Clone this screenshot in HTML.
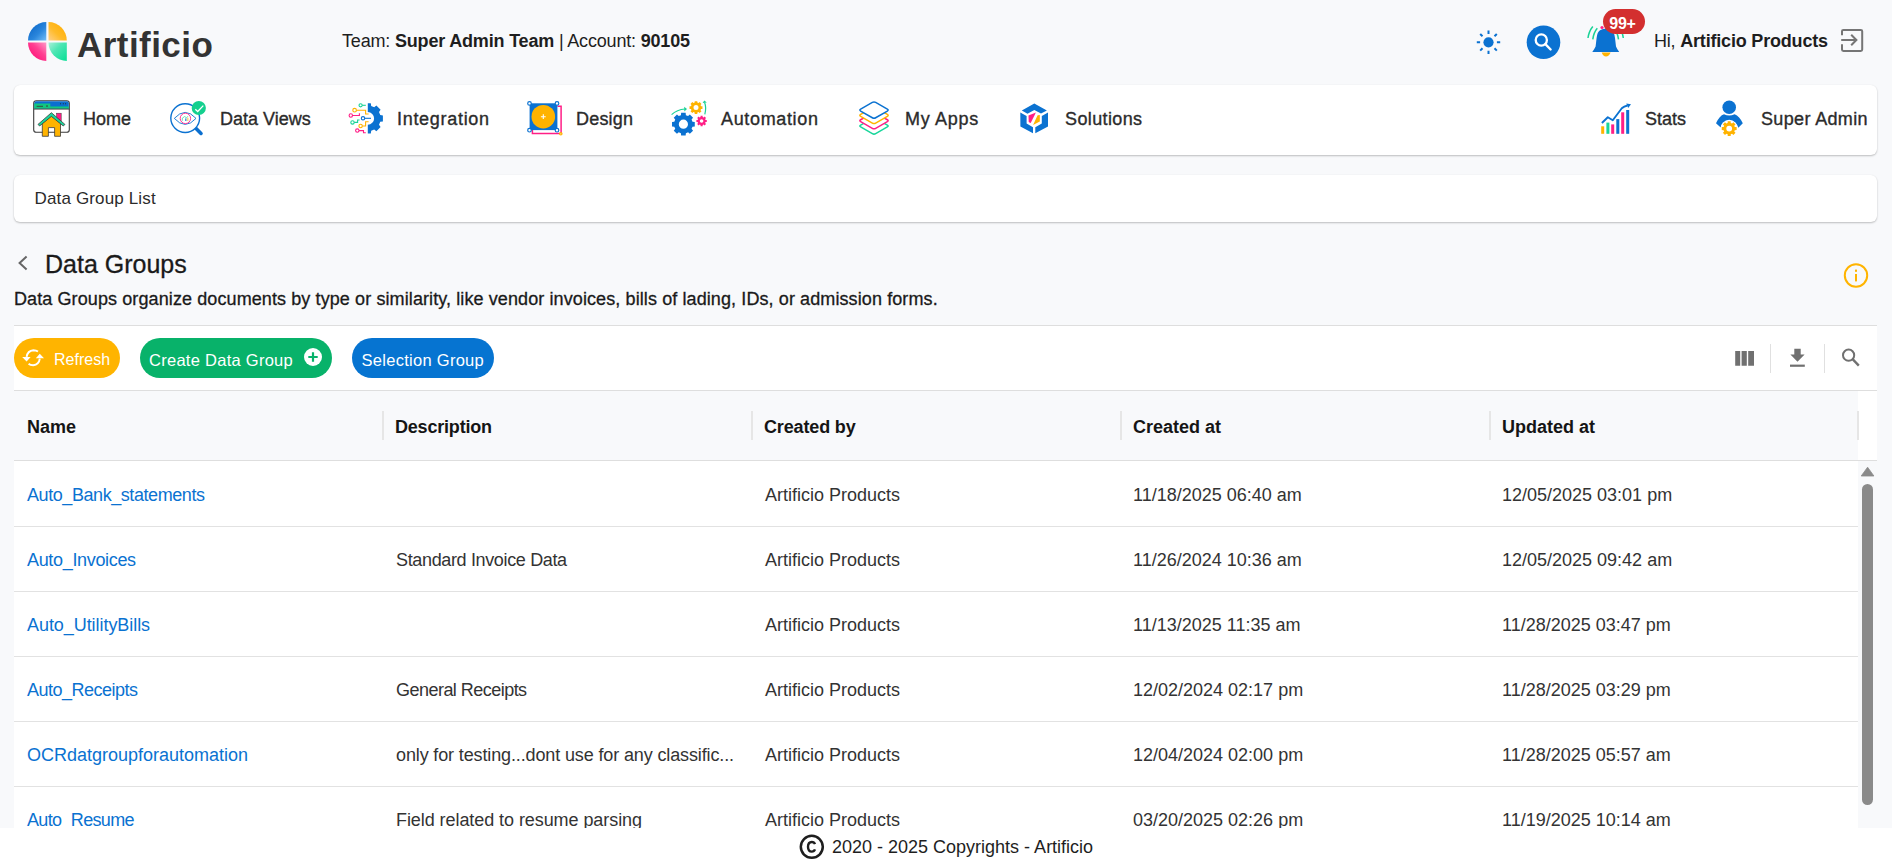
<!DOCTYPE html>
<html><head><meta charset="utf-8">
<style>
*{box-sizing:border-box;margin:0;padding:0}
html,body{width:1892px;height:865px;overflow:hidden}
body{background:#f8f9fb;font-family:"Liberation Sans",sans-serif;color:#212121;position:relative}
.a{position:absolute;white-space:nowrap}
.t18{font-size:18px;line-height:18px}
.card{position:absolute;background:#fff;border-radius:6px;box-shadow:0 1px 2px rgba(0,0,0,0.24),0 0 1px rgba(0,0,0,0.06)}
.nav{color:#2b2b2b;-webkit-text-stroke:0.35px #2b2b2b}
.sb{-webkit-text-stroke:0.3px currentColor}
.b{font-weight:700}
.btn{position:absolute;top:338px;height:40px;border-radius:20px;color:#fff}
.hdr{font-weight:700;color:#151515}
.cell{color:#333}
.lnk{color:#0a72d1}
.row{position:absolute;left:14px;width:1844px;height:1px;background:#e2e2e2}
.sep{position:absolute;top:411px;width:2px;height:29px;background:#e6e6e6}
</style></head><body>

<!-- header -->
<svg class="a" style="left:27px;top:20px" width="41" height="42" viewBox="0 0 41 42">
 <defs>
  <linearGradient id="lg1" x1="0.1" y1="0.1" x2="1" y2="1"><stop offset="0" stop-color="#0a66c8"/><stop offset="0.55" stop-color="#2a86dc"/><stop offset="1" stop-color="#72bdf7"/></linearGradient>
  <linearGradient id="lg2" x1="0.9" y1="0.1" x2="0" y2="1"><stop offset="0" stop-color="#ffae00"/><stop offset="0.55" stop-color="#ffbb2a"/><stop offset="1" stop-color="#ffd08a"/></linearGradient>
  <linearGradient id="lg3" x1="0.1" y1="0.9" x2="1" y2="0"><stop offset="0" stop-color="#ff0a73"/><stop offset="0.55" stop-color="#ff3f92"/><stop offset="1" stop-color="#ff9ac8"/></linearGradient>
  <linearGradient id="lg4" x1="0.9" y1="0.9" x2="0" y2="0"><stop offset="0" stop-color="#12e09a"/><stop offset="0.55" stop-color="#4ee6b4"/><stop offset="1" stop-color="#a8f0d8"/></linearGradient>
 </defs>
 <path d="M19.3 20.4 H1 A18.3 18.3 0 0 1 19.3 2.1 Z" fill="url(#lg1)"/>
 <path d="M21.5 20.4 V2.1 A18.3 18.3 0 0 1 39.8 20.4 Z" fill="url(#lg2)"/>
 <path d="M19.3 22.6 V40.9 A18.3 18.3 0 0 1 1 22.6 Z" fill="url(#lg3)"/>
 <path d="M21.5 22.6 H39.8 V40.9 A18.3 18.3 0 0 1 21.5 22.6 Z" fill="url(#lg4)"/>
</svg>
<div class="a b" style="left:77px;top:26.5px;font-size:35px;line-height:35px;color:#333;letter-spacing:0.45px">Artificio</div>

<div class="a t18" style="left:342px;top:32px;color:#1e1e1e;letter-spacing:-0.18px">Team: <b>Super Admin Team</b> | Account: <b>90105</b></div>

<div class="a t18" style="left:1654px;top:32px;color:#1e1e1e;letter-spacing:-0.19px">Hi, <b>Artificio Products</b></div>

<!-- header right icons -->
<svg class="a" style="left:1470px;top:24px" width="38" height="38" viewBox="0 0 38 38">
 <circle cx="18.5" cy="18.3" r="5.1" fill="#0b72d1"/>
 <g stroke="#0b72d1" stroke-width="2" stroke-linecap="butt">
  <path d="M18.5 6.6 V9.9 M18.5 26.7 V30 M6.8 18.3 H10.1 M26.9 18.3 H30.2 M10.2 10 L12.5 12.3 M24.5 24.3 L26.8 26.6 M10.2 26.6 L12.5 24.3 M24.5 12.3 L26.8 10"/>
 </g>
</svg>
<svg class="a" style="left:1526px;top:25px" width="36" height="36" viewBox="0 0 36 36">
 <circle cx="17.5" cy="17.3" r="16.8" fill="#0b72d1"/>
 <circle cx="15.3" cy="15" r="5.6" fill="none" stroke="#fff" stroke-width="2.3"/>
 <path d="M19.4 19.2 L24.6 24.5" stroke="#fff" stroke-width="2.4" stroke-linecap="round"/>
</svg>
<svg class="a" style="left:1584px;top:18px" width="44" height="42" viewBox="0 0 44 42">
 <g fill="none" stroke="#19d296" stroke-width="1.5">
  <path d="M8.8 8.5 Q4.8 13.5 4 20"/><path d="M13.3 10.2 Q9.6 14.5 8.8 21.3"/>
  <path d="M34.5 8.5 Q38.5 13.5 39.3 20"/><path d="M30 10.2 Q33.7 14.5 34.5 21.3"/>
 </g>
 <circle cx="18" cy="9.5" r="1.6" fill="#ff1f86"/>
 <path d="M16 12.2 Q13.2 14 12.6 20 L11.6 28.5 Q10.2 31.5 8.3 33.9 H35.2 Q33.2 31.5 32 28.5 L31 20 Q30.4 14 27.5 12.2 Q22 9.5 16 12.2Z" fill="#0b72d1"/>
 <path d="M17.6 34.4 H26.6 Q25 38.5 22 38.5 Q19.2 38.5 17.6 34.4Z" fill="#ffb300"/>
 <path d="M20.7 11 Q22 8 24 11Z" fill="#ff1f86"/>
</svg>
<div class="a" style="left:1602.6px;top:9.3px;width:42.6px;height:25.2px;border-radius:12.6px;background:#d32f2f"></div>
<div class="a b" style="left:1609.3px;top:15.6px;font-size:16px;line-height:16px;color:#fff;letter-spacing:-0.3px">99+</div>
<svg class="a" style="left:1838px;top:26px" width="28" height="28" viewBox="0 0 28 28">
 <path d="M4 9.3 V5.3 Q4 3.9 5.4 3.9 H22.8 Q24.2 3.9 24.2 5.3 V23.5 Q24.2 24.9 22.8 24.9 H5.4 Q4 24.9 4 23.5 V18.3" fill="none" stroke="#757575" stroke-width="2"/>
 <path d="M3.2 14 H18" stroke="#757575" stroke-width="2"/>
 <path d="M13.2 8.8 L18.4 14 L13.2 19.2" fill="none" stroke="#757575" stroke-width="2"/>
</svg>

<!-- nav card -->
<div class="card" style="left:14px;top:85px;width:1863px;height:70px"></div>
<div class="a t18 nav" style="left:83px;top:110px">Home</div>
<div class="a t18 nav" style="left:220px;top:110px">Data Views</div>
<div class="a t18 nav" style="left:397px;top:110px;letter-spacing:0.7px">Integration</div>
<div class="a t18 nav" style="left:576px;top:110px;letter-spacing:0.2px">Design</div>
<div class="a t18 nav" style="left:721px;top:110px;letter-spacing:0.65px">Automation</div>
<div class="a t18 nav" style="left:905px;top:110px;letter-spacing:0.7px">My Apps</div>
<div class="a t18 nav" style="left:1065px;top:110px;letter-spacing:0.37px">Solutions</div>
<div class="a t18 nav" style="left:1645px;top:110px">Stats</div>
<div class="a t18 nav" style="left:1761px;top:110px;letter-spacing:0.35px">Super Admin</div>

<!-- nav icons -->
<svg class="a" style="left:28px;top:95px" width="50" height="47" viewBox="0 0 50 47">
 <rect x="5.7" y="5.7" width="35.6" height="31.6" rx="2.6" fill="#fff" stroke="#3b3b3b" stroke-width="1.1"/>
 <path d="M6.3 8.3 Q6.3 6.3 8.3 6.3 H38.8 Q40.8 6.3 40.8 8.3 V13.7 H6.3Z" fill="#0b6fd0"/>
 <path d="M6.3 8.6 H22.3 V11.4 H40.8 V13.7 H6.3Z" fill="#11c77f"/>
 <line x1="5.8" y1="14.1" x2="41.2" y2="14.1" stroke="#3b3b3b" stroke-width="0.9"/>
 <line x1="8.6" y1="11.3" x2="15" y2="11.3" stroke="#3b3b3b" stroke-width="0.9"/>
 <circle cx="19" cy="11.1" r="0.8" fill="#3b3b3b"/>
 <circle cx="32.6" cy="8.7" r="0.55" fill="#222"/><circle cx="35.3" cy="8.7" r="0.55" fill="#222"/><circle cx="37.6" cy="8.7" r="0.55" fill="#222"/>
 <rect x="28.6" y="18.2" width="4.6" height="8" fill="#ff1f86" stroke="#3b3b3b" stroke-width="0.5"/>
 <path d="M14.3 41.3 V28.4 L23.4 20.8 L32.5 28.4 V41.3 H26.6 V32.6 H20.4 V41.3Z" fill="#ffb300" stroke="#3b3b3b" stroke-width="0.8"/>
 <path d="M23.4 17.7 L36.9 29.4 L35.3 31 L23.4 21.4 L11.6 31 L10 29.4Z" fill="#18d69b" stroke="#3b3b3b" stroke-width="0.8" stroke-linejoin="round"/>
</svg>
<svg class="a" style="left:164px;top:95px" width="50" height="47" viewBox="0 0 50 47">
 <line x1="31.8" y1="33.2" x2="37" y2="38.4" stroke="#0b6fcf" stroke-width="3.6" stroke-linecap="round"/>
 <circle cx="21.2" cy="23.1" r="14.4" fill="#fff" stroke="#0b72d1" stroke-width="1.4"/>
 <path d="M10.3 23.4 Q21.2 11.4 32 23.4 Q21.2 35.4 10.3 23.4Z" fill="none" stroke="#0b72d1" stroke-width="0.9"/>
 <circle cx="21.4" cy="23.4" r="5.2" fill="#fff" stroke="#ff1f86" stroke-width="0.9"/>
 <path d="M18.3 25.8 V23.2 L20.6 21.6 L22.3 22.6 L24.2 21.4" fill="none" stroke="#2fd09a" stroke-width="0.7"/>
 <rect x="21.3" y="23.4" width="1.1" height="2.6" fill="#0b72d1"/><rect x="23.3" y="22.8" width="1.1" height="3.2" fill="#ffc94a"/>
 <circle cx="34.8" cy="13" r="7.1" fill="#14d08f"/>
 <path d="M31.3 14.3 L33.7 16.5 L39.3 10.6" fill="none" stroke="#fff" stroke-width="1.3"/>
</svg>
<svg class="a" style="left:342px;top:95px" width="50" height="47" viewBox="0 0 50 47">
 <defs><clipPath id="hg"><rect x="25.8" y="0" width="25" height="47"/></clipPath></defs>
 <path clip-path="url(#hg)" fill-rule="evenodd" fill="#0b72d1" d="M22.40 10.96 L22.80 8.30 L28.80 8.30 L29.20 10.96 L32.19 12.19 L34.36 10.60 L38.60 14.84 L37.01 17.01 L38.24 20.00 L40.90 20.40 L40.90 26.40 L38.24 26.80 L37.01 29.79 L38.60 31.96 L34.36 36.20 L32.19 34.61 L29.20 35.84 L28.80 38.50 L22.80 38.50 L22.40 35.84 L19.41 34.61 L17.24 36.20 L13.00 31.96 L14.59 29.79 L13.36 26.80 L10.70 26.40 L10.70 20.40 L13.36 20.00 L14.59 17.01 L13.00 14.84 L17.24 10.60 L19.41 12.19Z M32.10 23.40 A6.3 6.3 0 1 0 19.50 23.40 A6.3 6.3 0 1 0 32.10 23.40Z"/>
 <g fill="none" stroke-width="1.1">
  <g stroke="#19d296"><circle cx="18.6" cy="10.3" r="1.6"/><path d="M20.2 10.3 H23.8"/><circle cx="10.5" cy="27.4" r="1.7"/><path d="M12.2 27.4 H15.6 V25 H17.6"/></g>
  <g stroke="#ffb300"><circle cx="12.6" cy="15.2" r="1.8"/><path d="M14.4 15.2 H23.6 V19 H26.6"/><circle cx="18.6" cy="31" r="1.7"/><path d="M20.3 31 H23.6 V26.8 H26.6"/></g>
  <g stroke="#ff1f86"><circle cx="8.8" cy="20.5" r="1.7"/><path d="M10.5 20.5 H17.4 V18.2"/><circle cx="15.3" cy="35.6" r="1.7"/><path d="M17 35.6 H21.5 V37.8 H23.8"/></g>
  <g stroke="#0b72d1"><circle cx="21" cy="23.3" r="1.7"/><path d="M22.7 23.3 H29"/></g>
 </g>
</svg>
<svg class="a" style="left:520px;top:95px" width="50" height="47" viewBox="0 0 50 47">
 <path d="M37.5 11.3 H41.1 V38.6 H12.4 V35" fill="none" stroke="#ff1f86" stroke-width="1.5"/>
 <rect x="9.6" y="8.3" width="27.8" height="26.8" fill="#0b72d1"/>
 <circle cx="23.3" cy="21.7" r="11.8" fill="#ffb300"/>
 <path d="M23.3 19.3 V24.1 M20.9 21.7 H25.7" stroke="#fff" stroke-width="1.1"/>
 <g fill="#fff" stroke="#0b72d1" stroke-width="1.2"><circle cx="9.5" cy="8.4" r="1.8"/><circle cx="37" cy="8.4" r="1.8"/><circle cx="9.5" cy="35.2" r="1.8"/><circle cx="37" cy="35.2" r="1.8"/></g>
 <circle cx="40.8" cy="38.8" r="1.8" fill="#ffb300"/><circle cx="40.8" cy="38.8" r="0.6" fill="#ffe7a8"/>
</svg>
<svg class="a" style="left:665px;top:95px" width="50" height="47" viewBox="0 0 50 47">
 <path fill-rule="evenodd" fill="#0b72d1" d="M15.92 20.13 L16.14 17.82 L20.66 17.82 L20.88 20.13 L23.06 21.03 L24.84 19.55 L28.05 22.76 L26.57 24.54 L27.47 26.72 L29.78 26.94 L29.78 31.46 L27.47 31.68 L26.57 33.86 L28.05 35.64 L24.84 38.85 L23.06 37.37 L20.88 38.27 L20.66 40.58 L16.14 40.58 L15.92 38.27 L13.74 37.37 L11.96 38.85 L8.75 35.64 L10.23 33.86 L9.33 31.68 L7.02 31.46 L7.02 26.94 L9.33 26.72 L10.23 24.54 L8.75 22.76 L11.96 19.55 L13.74 21.03Z M23.00 29.20 A4.6 4.6 0 1 0 13.80 29.20 A4.6 4.6 0 1 0 23.00 29.20Z"/>
 <path fill-rule="evenodd" fill="#ffb300" d="M29.63 7.58 L29.71 6.13 L32.29 6.13 L32.37 7.58 L33.58 8.08 L34.67 7.11 L36.49 8.93 L35.52 10.02 L36.02 11.23 L37.47 11.31 L37.47 13.89 L36.02 13.97 L35.52 15.18 L36.49 16.27 L34.67 18.09 L33.58 17.12 L32.37 17.62 L32.29 19.07 L29.71 19.07 L29.63 17.62 L28.42 17.12 L27.33 18.09 L25.51 16.27 L26.48 15.18 L25.98 13.97 L24.53 13.89 L24.53 11.31 L25.98 11.23 L26.48 10.02 L25.51 8.93 L27.33 7.11 L28.42 8.08Z M33.50 12.60 A2.5 2.5 0 1 0 28.50 12.60 A2.5 2.5 0 1 0 33.50 12.60Z"/>
 <path fill-rule="evenodd" fill="#ff1f86" d="M35.52 22.05 L35.57 20.80 L37.63 20.80 L37.68 22.05 L38.63 22.44 L39.54 21.59 L41.01 23.06 L40.16 23.970 L40.55 24.92 L41.80 24.97 L41.80 27.03 L40.55 27.08 L40.16 28.03 L41.01 28.94 L39.54 30.41 L38.63 29.56 L37.68 29.95 L37.63 31.20 L35.57 31.20 L35.52 29.95 L34.57 29.56 L33.66 30.41 L32.19 28.94 L33.04 28.03 L32.65 27.08 L31.40 27.03 L31.40 24.97 L32.65 24.92 L33.04 23.97 L32.19 23.06 L33.66 21.59 L34.57 22.44Z M38.40 26.00 A1.8 1.8 0 1 0 34.80 26.00 A1.8 1.8 0 1 0 38.40 26.00Z"/>
 <path d="M6.6 19.6 Q12 14.6 20 14" fill="none" stroke="#19d296" stroke-width="1.2"/>
 <path d="M19.2 11.8 L22 14 L19.4 16.4Z" fill="#19d296"/>
 <path d="M39.8 19.4 Q41.6 12.5 39.6 7.6" fill="none" stroke="#19d296" stroke-width="1.2"/>
 <path d="M37.6 8 L39.3 5.6 L41.8 7.4Z" fill="#19d296"/>
</svg>
<svg class="a" style="left:850px;top:95px" width="50" height="47" viewBox="0 0 50 47">
 <g stroke-width="1.5" stroke-linejoin="round" fill="#fff">
  <path d="M22.35 23.35 Q24.00 22.40 25.65 23.35 L37.35 30.05 Q39.00 31.00 37.35 31.95 L25.65 38.65 Q24.00 39.60 22.35 38.65 L10.65 31.95 Q9.00 31.00 10.65 30.05Z" stroke="#18d69b"/>
  <path d="M22.35 18.05 Q24.00 17.10 25.65 18.05 L37.35 24.75 Q39.00 25.70 37.35 26.65 L25.65 33.35 Q24.00 34.30 22.35 33.35 L10.65 26.65 Q9.00 25.70 10.65 24.75Z" stroke="#ff1f86"/>
  <path d="M22.35 12.75 Q24.00 11.80 25.65 12.75 L37.35 19.45 Q39.00 20.40 37.35 21.35 L25.65 28.05 Q24.00 29.00 22.35 28.05 L10.65 21.35 Q9.00 20.40 10.65 19.45Z" stroke="#ffb300"/>
  <path d="M22.35 7.45 Q24.00 6.50 25.65 7.45 L37.35 14.15 Q39.00 15.10 37.35 16.05 L25.65 22.75 Q24.00 23.70 22.35 22.75 L10.65 16.05 Q9.00 15.10 10.65 14.15Z" stroke="#0b72d1"/>
 </g>
</svg>
<svg class="a" style="left:1010px;top:95px" width="50" height="47" viewBox="0 0 50 47">
 <g fill="#0b72d1">
  <path d="M11.8 15.4 L24.3 8.6 L36.9 15.4 L31 18.6 L24.3 15 L17.5 18.7Z"/>
  <path d="M10.3 17.6 L16.6 21 V28.6 L23 32.2 V38.3 L10.4 31.4Z"/>
  <path d="M38 17.6 L31.8 21 V28.6 L25.3 32.2 V38.3 L38 31.4Z"/>
 </g>
 <path d="M18.5 20.5 L25.9 17.6 L20.7 28 Q19 27.8 18.7 26.4Z" fill="#ff1f86"/>
 <path d="M27.6 20.3 L29.8 19.9 V26.4 L23.1 29.9Z" fill="#ffb300"/>
</svg>
<svg class="a" style="left:1592px;top:95px" width="50" height="47" viewBox="0 0 50 47">
 <rect x="9.2" y="31.3" width="3" height="7.5" fill="#ffb300"/>
 <rect x="14.4" y="27.6" width="3" height="11.2" fill="#18d69b"/>
 <rect x="19.2" y="29.4" width="3" height="9.4" fill="#ff1f86"/>
 <rect x="24.3" y="24.1" width="3" height="14.7" fill="#0b72d1"/>
 <rect x="29.2" y="17.3" width="3" height="21.5" fill="#ff1f86"/>
 <rect x="34.2" y="15" width="3" height="23.8" fill="#0b72d1"/>
 <path d="M9.9 28 L15.8 22.2 L20.8 25.3 L29.8 13.2 Q32 11.3 35.5 10.5" fill="none" stroke="#0b72d1" stroke-width="1.9" stroke-linejoin="round"/>
 <path d="M34.3 8.5 L39 9.2 L36.2 13Z" fill="#0b72d1"/>
</svg>
<svg class="a" style="left:1705px;top:95px" width="50" height="47" viewBox="0 0 50 47">
 <circle cx="24.2" cy="12.3" r="6.8" fill="#0b72d1"/>
 <path d="M11 28.3 Q14.5 20.5 19 19.2 Q24.2 21.6 29.6 19.2 Q34.5 21 37.8 28.3 L33.3 32.7 Q30.5 25.6 24.2 25.4 Q17.8 25.6 15.7 32.6Z" fill="#0b72d1"/>
 <circle cx="24.2" cy="33.6" r="8.8" fill="#fff"/>
 <path fill-rule="evenodd" fill="#ffb300" d="M22.67 28.01 L22.72 26.15 L25.68 26.15 L25.73 28.01 L27.07 28.56 L28.42 27.28 L30.52 29.38 L29.24 30.73 L29.79 32.07 L31.65 32.12 L31.65 35.08 L29.79 35.13 L29.24 36.47 L30.52 37.82 L28.42 39.92 L27.07 38.64 L25.73 39.19 L25.68 41.05 L22.72 41.05 L22.67 39.19 L21.33 38.64 L19.98 39.92 L17.88 37.82 L19.16 36.47 L18.61 35.13 L16.75 35.08 L16.75 32.12 L18.61 32.07 L19.16 30.73 L17.88 29.38 L19.98 27.28 L21.330 28.56Z M27.10 33.60 A2.9 2.9 0 1 0 21.30 33.60 A2.9 2.9 0 1 0 27.10 33.60Z"/>
</svg>

<!-- breadcrumb -->
<div class="card" style="left:14px;top:175px;width:1863px;height:47px"></div>
<div class="a" style="left:34.5px;top:190px;font-size:17px;line-height:17px;color:#2b2b2b;letter-spacing:0.15px">Data Group List</div>

<!-- title -->
<div class="a sb" style="left:45px;top:252px;font-size:25px;line-height:25px;color:#1a1a1a">Data Groups</div>
<div class="a t18 sb" style="left:14px;top:290px;color:#1a1a1a;letter-spacing:0.1px">Data Groups organize documents by type or similarity, like vendor invoices, bills of lading, IDs, or admission forms.</div>

<!-- toolbar -->
<div class="a" style="left:14px;top:325px;width:1863px;height:66px;background:#fff;border-top:1px solid #dedede;border-bottom:1px solid #dedede"></div>
<div class="btn" style="left:14px;width:106px;background:#ffb400"></div>
<div class="btn" style="left:140px;width:192px;background:#08b26a"></div>
<div class="btn" style="left:352px;width:142px;background:#0674d1"></div>
<div class="a" style="left:54px;top:352px;font-size:16px;line-height:16px;color:#fff">Refresh</div>
<div class="a" style="left:149px;top:351.5px;font-size:16.5px;line-height:16px;color:#fff;letter-spacing:0.27px">Create Data Group</div>
<div class="a" style="left:361.5px;top:351.5px;font-size:16.5px;line-height:16px;color:#fff;letter-spacing:0.28px">Selection Group</div>

<!-- misc icons -->
<svg class="a" style="left:14px;top:252px" width="20" height="22" viewBox="0 0 20 22">
 <path d="M12.6 4.6 L5.6 11 L12.6 17.4" fill="none" stroke="#666" stroke-width="2"/>
</svg>
<svg class="a" style="left:1840px;top:260px" width="32" height="32" viewBox="0 0 32 32">
 <circle cx="16" cy="15.5" r="11.2" fill="none" stroke="#ffb400" stroke-width="2"/>
 <rect x="15" y="14" width="2" height="7.4" fill="#ffb400"/>
 <rect x="15" y="9.6" width="2" height="2.2" fill="#ffb400"/>
</svg>
<svg class="a" style="left:20px;top:346px" width="26" height="24" viewBox="0 0 26 24">
 <path d="M6.6 10.8 Q7.6 4.6 13.4 4.2 Q16.2 4.2 18 5.6" fill="none" stroke="#fff" stroke-width="1.9"/>
 <path d="M19.8 12.6 Q19 18.6 13.2 19.2 Q10.2 19.2 8.6 17.8" fill="none" stroke="#fff" stroke-width="1.9"/>
 <path d="M2.2 11 L6.6 15.4 L10.6 11Z" fill="#fff"/>
 <path d="M15.8 12.2 L19.8 7.8 L24 12.2Z" fill="#fff"/>
</svg>
<svg class="a" style="left:302px;top:346px" width="22" height="22" viewBox="0 0 22 22">
 <circle cx="11" cy="11" r="9" fill="#fff"/>
 <path d="M11 6.3 V15.7 M6.3 11 H15.7" stroke="#08b26a" stroke-width="2.2"/>
</svg>
<svg class="a" style="left:1730px;top:344px" width="30" height="28" viewBox="0 0 30 28">
 <path d="M5.2 7 H10.2 V21.7 H5.2Z M11.6 7 H16.8 V21.7 H11.6Z M18.2 7 H24 V21.7 H18.2Z" fill="#707070"/>
</svg>
<div class="a" style="left:1770px;top:344px;width:1px;height:29px;background:#e0e0e0"></div>
<svg class="a" style="left:1783px;top:344px" width="30" height="28" viewBox="0 0 30 28">
 <path d="M11.3 4.8 H17.7 V10.5 H21.6 L14.5 17.7 L7.4 10.5 H11.3Z" fill="#707070"/>
 <rect x="7" y="20.6" width="14.8" height="2.2" fill="#707070"/>
</svg>
<div class="a" style="left:1824px;top:344px;width:1px;height:29px;background:#e0e0e0"></div>
<svg class="a" style="left:1838px;top:344px" width="28" height="28" viewBox="0 0 28 28">
 <circle cx="10.6" cy="11.2" r="5.6" fill="none" stroke="#707070" stroke-width="2"/>
 <path d="M14.6 15.2 L20.8 21.6" stroke="#707070" stroke-width="2.4"/>
</svg>


<!-- table header -->
<div class="a" style="left:14px;top:391px;width:1844px;height:69px;background:#f8f9fb"></div>
<div class="a" style="left:1858px;top:391px;width:19px;height:69px;background:#fff"></div>
<div class="a" style="left:14px;top:460px;width:1863px;height:1px;background:#dedede"></div>
<div class="sep" style="left:382px"></div>
<div class="sep" style="left:751px"></div>
<div class="sep" style="left:1120px"></div>
<div class="sep" style="left:1489px"></div>
<div class="sep" style="left:1857px"></div>
<div class="a t18 hdr" style="left:27px;top:418px">Name</div>
<div class="a t18 hdr" style="left:395px;top:418px;letter-spacing:-0.2px">Description</div>
<div class="a t18 hdr" style="left:764px;top:418px;letter-spacing:-0.15px">Created by</div>
<div class="a t18 hdr" style="left:1133px;top:418px">Created at</div>
<div class="a t18 hdr" style="left:1502px;top:418px">Updated at</div>

<!-- rows -->
<div class="a" style="left:14px;top:461px;width:1844px;height:367px;background:#fff"></div>
<div class="row" style="top:526px"></div>
<div class="row" style="top:591px"></div>
<div class="row" style="top:656px"></div>
<div class="row" style="top:721px"></div>
<div class="row" style="top:786px"></div>

<div class="a t18 lnk" style="left:27px;top:486px;letter-spacing:-0.43px">Auto_Bank_statements</div>
<div class="a t18 cell" style="left:765px;top:486px">Artificio Products</div>
<div class="a t18 cell" style="left:1133px;top:486px">11/18/2025 06:40 am</div>
<div class="a t18 cell" style="left:1502px;top:486px">12/05/2025 03:01 pm</div>

<div class="a t18 lnk" style="left:27px;top:551px;letter-spacing:-0.33px">Auto_Invoices</div>
<div class="a t18 cell" style="left:396px;top:551px;letter-spacing:-0.35px">Standard Invoice Data</div>
<div class="a t18 cell" style="left:765px;top:551px">Artificio Products</div>
<div class="a t18 cell" style="left:1133px;top:551px">11/26/2024 10:36 am</div>
<div class="a t18 cell" style="left:1502px;top:551px">12/05/2025 09:42 am</div>

<div class="a t18 lnk" style="left:27px;top:616px;letter-spacing:-0.06px">Auto_UtilityBills</div>
<div class="a t18 cell" style="left:765px;top:616px">Artificio Products</div>
<div class="a t18 cell" style="left:1133px;top:616px">11/13/2025 11:35 am</div>
<div class="a t18 cell" style="left:1502px;top:616px">11/28/2025 03:47 pm</div>

<div class="a t18 lnk" style="left:27px;top:681px;letter-spacing:-0.5px">Auto_Receipts</div>
<div class="a t18 cell" style="left:396px;top:681px;letter-spacing:-0.53px">General Receipts</div>
<div class="a t18 cell" style="left:765px;top:681px">Artificio Products</div>
<div class="a t18 cell" style="left:1133px;top:681px">12/02/2024 02:17 pm</div>
<div class="a t18 cell" style="left:1502px;top:681px">11/28/2025 03:29 pm</div>

<div class="a t18 lnk" style="left:27px;top:746px">OCRdatgroupforautomation</div>
<div class="a t18 cell" style="left:396px;top:746px;letter-spacing:-0.13px">only for testing...dont use for any classific...</div>
<div class="a t18 cell" style="left:765px;top:746px">Artificio Products</div>
<div class="a t18 cell" style="left:1133px;top:746px">12/04/2024 02:00 pm</div>
<div class="a t18 cell" style="left:1502px;top:746px">11/28/2025 05:57 am</div>

<div class="a t18 lnk" style="left:27px;top:811px;letter-spacing:-0.65px">Auto_Resume</div>
<div class="a t18 cell" style="left:396px;top:811px;letter-spacing:-0.07px">Field related to resume parsing</div>
<div class="a t18 cell" style="left:765px;top:811px">Artificio Products</div>
<div class="a t18 cell" style="left:1133px;top:811px">03/20/2025 02:26 pm</div>
<div class="a t18 cell" style="left:1502px;top:811px">11/19/2025 10:14 am</div>

<!-- scrollbar -->
<div class="a" style="left:1858px;top:461px;width:19px;height:367px;background:#f8f9fb"></div>
<div class="a" style="left:1862px;top:484px;width:11px;height:321px;border-radius:6px;background:#8a8a8a"></div>

<svg class="a" style="left:1858px;top:464px" width="19" height="16" viewBox="0 0 19 16">
 <path d="M9.6 3.2 L15.9 12 H3.2Z" fill="#8a8a8a" stroke="#8a8a8a" stroke-width="0.8" stroke-linejoin="round"/>
</svg>
<!-- footer -->
<div class="a" style="left:0;top:828px;width:1892px;height:37px;background:#fff"></div>
<div class="a t18" style="left:832px;top:838px;color:#1e1e1e">2020 - 2025 Copyrights - Artificio</div>

<svg class="a" style="left:796px;top:832px" width="30" height="30" viewBox="0 0 30 30">
 <circle cx="15.8" cy="14.8" r="11" fill="none" stroke="#1e1e1e" stroke-width="2.5"/>
 <path d="M19 12.2 Q18.2 10 15.8 10 Q12 10 12 14.8 Q12 19.6 15.8 19.6 Q18.2 19.6 19 17.4" fill="none" stroke="#1e1e1e" stroke-width="2.4"/>
</svg>

</body></html>
